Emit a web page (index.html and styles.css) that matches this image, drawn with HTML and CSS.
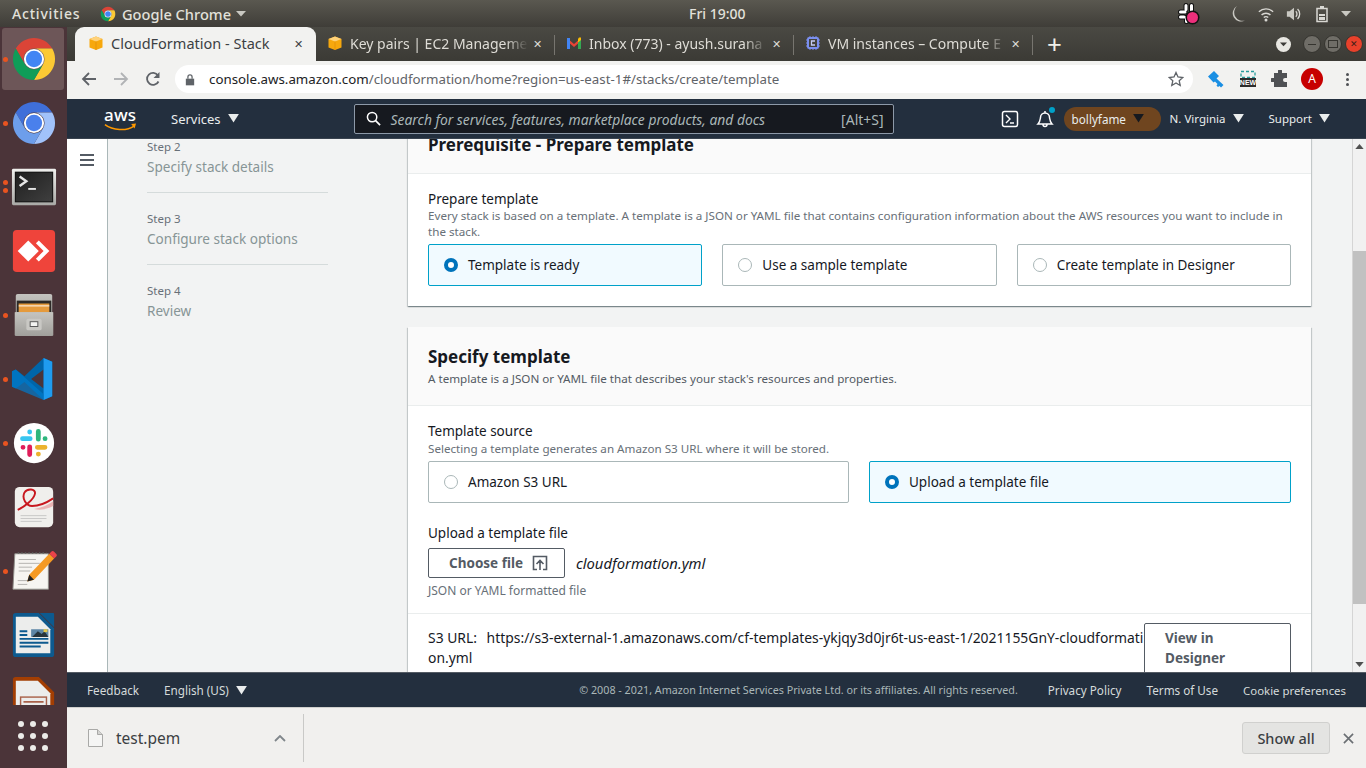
FILE: index.html
```html
<!DOCTYPE html>
<html>
  <head>
    <title>CloudFormation - Stack</title>
    <link rel="stylesheet" href="styles.css">
  </head>
  <body>
    <svg class="defs" width="0" height="0">
      <defs>
        <linearGradient id="bezel" x1="0" y1="0" x2="0" y2="1">
          <stop offset="0" stop-color="#f0f0ee"/>
          <stop offset="1" stop-color="#a9a9a6"/>
        </linearGradient>
        <linearGradient id="screen" x1="0" y1="0" x2="1" y2="1">
          <stop offset="0" stop-color="#1f1f1f"/>
          <stop offset="1" stop-color="#3f3f3f"/>
        </linearGradient>
        <linearGradient id="drawer" x1="0" y1="0" x2="0" y2="1">
          <stop offset="0" stop-color="#c4c3bf"/>
          <stop offset="1" stop-color="#8e8d89"/>
        </linearGradient>
      </defs>
      <symbol id="chrome" viewBox="0 0 48 48">
        <path fill="#db4437" d="M5 13A22 22 0 0 1 43 13H24A11 11 0 0 0 14.500 29.500Z"/>
        <path fill="#fcc934" d="M43 13A22 22 0 0 1 24 46L33.500 29.500A11 11 0 0 0 24 13Z"/>
        <path fill="#0f9d58" d="M24 46A22 22 0 0 1 5 13L14.500 29.500A11 11 0 0 0 33.500 29.500Z"/>
        <circle cx="24" cy="24" r="10.500" fill="#fff"/>
        <circle cx="24" cy="24" r="8.500" fill="#4285f4"/>
      </symbol>
      <symbol id="cube" viewBox="0 0 16 16">
        <path fill="#f7a80d" d="M1.500 4L8 1.500 14.500 4v8.500L8 15l-6.500-2.500z"/>
        <path fill="#ffd27a" d="M1.500 4L8 1.500 14.500 4 8 6.500z"/>
        <path fill="#e8930a" d="M7.500 6.500h1V15h-1z"/>
      </symbol>
      <symbol id="caret" viewBox="0 0 12 10">
        <path fill="currentColor" d="M0 0h12L6 9.500z"/>
      </symbol>
    </svg>

    <div class="topbar">
      <span class="activities">Activities</span>
      <span class="app-menu">
        <svg class="app-icon"><use href="#chrome"/></svg>
        Google Chrome
        <svg class="top-caret" viewBox="0 0 10 6"><path fill="currentColor" d="M0 0h10L5 5.500z"/></svg>
      </span>
      <span class="clock">Fri 19:00</span>
      <div class="tray">
        <svg class="tray-slack" viewBox="0 0 24 24">
          <path fill="none" stroke="#111" stroke-width="5" stroke-linecap="round" d="M9 3.500v4M3.500 10H8M14.500 3.500v5M3.500 15H7M9.500 15.500v4"/>
          <path fill="none" stroke="#fff" stroke-width="3" stroke-linecap="round" d="M9 3.500v4M3.500 10H8M14.500 3.500v5M3.500 15H7M9.500 15.500v4"/>
          <circle cx="15.500" cy="15.500" r="7" fill="#111"/>
          <circle cx="15.500" cy="15.500" r="5.500" fill="#ec2f7b"/>
        </svg>
        <svg class="tray-icon" viewBox="0 0 16 18"><path fill="#c9c8c2" d="M7 1a8 8 0 1 0 8 14.500A8.500 8.500 0 0 1 7 1z"/></svg>
        <svg class="tray-icon" viewBox="0 0 18 18">
          <g fill="none" stroke="#d9d8d3" stroke-width="1.600">
            <path d="M1 6.500a11.500 11.500 0 0 1 16 0M4 10a7.500 7.500 0 0 1 10 0M6.500 13a3.500 3.500 0 0 1 5 0"/>
          </g>
          <circle cx="9" cy="15.800" r="1.700" fill="#d9d8d3"/>
        </svg>
        <svg class="tray-icon" viewBox="0 0 18 18">
          <path fill="#c9c8c2" d="M1 6h3l5-4v14l-5-4H1z"/>
          <path fill="none" stroke="#d9d8d3" stroke-width="1.500" d="M11 6a4 4 0 0 1 0 6M13 3.500a7.500 7.500 0 0 1 0 11"/>
        </svg>
        <svg class="tray-icon" viewBox="0 0 14 18">
          <path fill="none" stroke="#d9d8d3" stroke-width="1.500" d="M2 3.500h10v13H2z"/>
          <path fill="#d9d8d3" d="M5 1h4v2H5zM4 9h6v2H4zM4 12h6v3H4z"/>
        </svg>
        <svg class="top-caret" viewBox="0 0 10 6"><path fill="currentColor" d="M0 0h10L5 5.500z"/></svg>
      </div>
    </div>

    <div class="desktop">
      <aside class="dock">
        <div class="dock-apps">
          <div class="dock-item active"><i class="run"></i>
            <svg class="dock-icon"><use href="#chrome"/></svg>
          </div>
          <div class="dock-item"><i class="run"></i>
            <svg class="dock-icon" viewBox="0 0 48 48">
              <path fill="#3f6fd9" d="M5 13A22 22 0 0 1 43 13H24A11 11 0 0 0 14.500 29.500Z"/>
              <path fill="#a1c2fa" d="M43 13A22 22 0 0 1 24 46L33.500 29.500A11 11 0 0 0 24 13Z"/>
              <path fill="#6d9eeb" d="M24 46A22 22 0 0 1 5 13L14.500 29.500A11 11 0 0 0 33.500 29.500Z"/>
              <circle cx="24" cy="24" r="10.500" fill="#fff"/>
              <circle cx="24" cy="24" r="8.500" fill="#4a80ec"/>
            </svg>
          </div>
          <div class="dock-item"><i class="run double"></i>
            <svg class="dock-icon" viewBox="0 0 48 48">
              <rect x="1" y="5" width="46" height="38" rx="1.500" fill="url(#bezel)"/>
              <rect x="4" y="8" width="40" height="32" fill="#111"/>
              <rect x="5" y="9" width="38" height="30" fill="url(#screen)"/>
              <path fill="none" stroke="#e6e6e6" stroke-width="2.500" d="M9 13l7 5-7 5"/>
              <path fill="#e6e6e6" d="M18 25h8v2h-8z"/>
            </svg>
          </div>
          <div class="dock-item">
            <svg class="dock-icon" viewBox="0 0 48 48">
              <rect x="2" y="2" width="44" height="44" rx="4" fill="#ef443b"/>
              <path fill="#fff" d="M18 13l11 11-11 11L7 24z"/>
              <path fill="#fff" d="M29 13l11 11-11 11-3-3 8-8-8-8z"/>
            </svg>
          </div>
          <div class="dock-item"><i class="run"></i>
            <svg class="dock-icon" viewBox="0 0 48 48">
              <rect x="5" y="2" width="38" height="42" rx="2" fill="url(#drawer)"/>
              <rect x="6" y="9" width="36" height="12" fill="#2d2a27"/>
              <path fill="#e59a3c" d="M8 12h32v9H8z"/>
              <path fill="#fff" d="M8 14h32v1H8z"/>
              <path fill="#c9c8c4" d="M4 21h40v23a2 2 0 0 1-2 2H6a2 2 0 0 1-2-2z"/>
              <path fill="url(#drawer)" d="M4 21h40v25H4z" opacity=".7"/>
              <rect x="16" y="28" width="16" height="12" rx="2" fill="#c9c8c4"/>
              <rect x="20" y="31" width="8" height="5" fill="#f4f4f2" stroke="#555" stroke-width="1"/>
            </svg>
          </div>
          <div class="dock-item"><i class="run"></i>
            <svg class="dock-icon" viewBox="0 0 48 48">
              <path fill="#0065a9" d="M34 2L14 21 5 14 1 16v16l4 2 9-7 20 19 9-4V6zM34 14v20L21 24z"/>
              <path fill="#1f9cf0" d="M34 2l9 4v36l-9 4z"/>
              <path fill="#007acc" d="M5 14l29 26v6L1 32V16z" opacity=".7"/>
            </svg>
          </div>
          <div class="dock-item"><i class="run"></i>
            <svg class="dock-icon" viewBox="0 0 48 48">
              <circle cx="24" cy="24" r="21" fill="#fff"/>
              <g fill="none" stroke-width="5" stroke-linecap="round">
                <path stroke="#36c5f0" d="M19.500 12.500v.1M12 19.500h8"/>
                <path stroke="#2eb67d" d="M28.500 12v8M35.500 19.500h.1"/>
                <path stroke="#ecb22e" d="M35.500 28.500h-8M28.500 35.500h.1"/>
                <path stroke="#e01e5a" d="M19.500 36v-8M12.500 28.500h.1"/>
              </g>
            </svg>
          </div>
          <div class="dock-item">
            <svg class="dock-icon" viewBox="0 0 48 48">
              <rect x="4" y="3" width="40" height="42" rx="5" fill="#f0efec"/>
              <path fill="none" stroke="#c8181f" stroke-width="2" d="M7 27c7-3 17-11 18-17 1-5-8-6-11-1-3 6 2 14 8 14 8 0 16-4 22-8"/>
              <path fill="#eab4b4" d="M24 26c8-1 14-4 20-8v5c-6 3-13 5-20 3z"/>
              <path fill="none" stroke="#c7c7c5" d="M10 33h27M10 36h27M10 39h22"/>
            </svg>
          </div>
          <div class="dock-item"><i class="run"></i>
            <svg class="dock-icon" viewBox="0 0 48 48">
              <path fill="#f6f5f1" stroke="#8f8e89" d="M4 6h35v37H2z"/>
              <path fill="none" stroke="#555" stroke-width="1.500" stroke-dasharray="1.500 2.200" d="M7 5h30"/>
              <path fill="none" stroke="#b3b2ad" d="M8 12h18M8 16h22M8 20h14M8 24h12M7 34h14M7 38h10"/>
              <path fill="#f59a23" d="M40 6l5 5-21 22-7 2 2-7z"/>
              <path fill="#222" d="M19 28l-2 7 7-2z"/>
              <path fill="#e8434a" d="M40 6l2-2a2 2 0 0 1 3 0l2 2a2 2 0 0 1 0 3l-2 2z"/>
            </svg>
          </div>
          <div class="dock-item">
            <svg class="dock-icon" viewBox="0 0 48 48">
              <path fill="#0d5a8f" d="M5 1h24l16 16v27a3 3 0 0 1-3 3H5a3 3 0 0 1-3-3V4a3 3 0 0 1 3-3z"/>
              <path fill="#0d5a8f" d="M30 1h14a1 1 0 0 1 1 1v14z"/>
              <path fill="#ecedec" d="M5 5h23l13 13v25H5z"/>
              <path fill="#0d5a8f" d="M9 19h8v2H9zM9 23h8v2H9zM9 27h30v2H9zM9 31h30v2H9zM9 35h22v2H9z"/>
              <rect x="21" y="18" width="18" height="8" fill="#5e86a6"/>
              <path fill="#27343c" d="M22 26l6-6 4 3 3-3 4 6z"/>
              <rect x="34" y="18" width="4" height="3" fill="#e6c84b"/>
            </svg>
          </div>
          <div class="dock-item clipped">
            <svg class="dock-icon" viewBox="0 0 48 48">
              <path fill="#a33e03" d="M5 1h24l16 16v27a3 3 0 0 1-3 3H5a3 3 0 0 1-3-3V4a3 3 0 0 1 3-3z"/>
              <path fill="#ecedec" d="M5 5h23l13 13v25H5z"/>
              <rect x="10" y="22" width="27" height="18" fill="none" stroke="#a9614a" stroke-width="1.500"/>
              <path fill="#a9614a" d="M13 26h21v2H13zM13 31h9v2h-9z"/>
            </svg>
          </div>
        </div>
        <div class="apps-grid">
          <i></i><i></i><i></i><i></i><i></i><i></i><i></i><i></i><i></i>
        </div>
      </aside>

      <div class="window">
        <div class="tabstrip">
          <div class="tab current">
            <svg class="favicon"><use href="#cube"/></svg>
            <span class="tab-title">CloudFormation - Stack</span>
            <span class="tab-close">&#10005;</span>
          </div>
          <div class="tab">
            <svg class="favicon"><use href="#cube"/></svg>
            <span class="tab-title">Key pairs | EC2 Manageme</span>
            <span class="tab-close">&#10005;</span>
          </div>
          <div class="tab">
            <svg class="favicon" viewBox="0 0 16 16">
              <path fill="#ea4335" d="M1 3l7 6 7-6v3l-7 6-7-6z"/>
              <path fill="#4285f4" d="M1 3h3v11H1z"/>
              <path fill="#34a853" d="M12 5h3v9h-3z"/>
              <path fill="#fbbc04" d="M13 2.500h2V5l-3 2.500V4z"/>
            </svg>
            <span class="tab-title">Inbox (773) - ayush.surana</span>
            <span class="tab-close">&#10005;</span>
          </div>
          <div class="tab">
            <svg class="favicon" viewBox="0 0 16 16">
              <rect x="3" y="3" width="10" height="10" rx="1" fill="none" stroke="#7b8ff0" stroke-width="2"/>
              <path fill="none" stroke="#7b8ff0" d="M5 1v2M8 1v2M11 1v2M5 13v2M8 13v2M11 13v2M1 5h2M1 8h2M1 11h2M13 5h2M13 8h2M13 11h2"/>
              <path fill="none" stroke="#c5cdf7" stroke-width="1.300" d="M10 6H6.500v4H10"/>
            </svg>
            <span class="tab-title">VM instances – Compute E</span>
            <span class="tab-close">&#10005;</span>
          </div>
          <span class="new-tab">+</span>
          <div class="win-controls">
            <span class="profile-drop"><svg viewBox="0 0 10 6"><path fill="#3c3b37" d="M0 0h10L5 5.500z"/></svg></span>
            <span class="win-btn minimize"></span>
            <span class="win-btn maximize"></span>
            <span class="win-btn close">&#10005;</span>
          </div>
        </div>

        <div class="toolbar">
          <svg class="tool-icon" viewBox="0 0 16 16"><path fill="none" stroke="#5f6368" stroke-width="1.800" d="M15 8H2M8 2L2 8l6 6"/></svg>
          <svg class="tool-icon faded" viewBox="0 0 16 16"><path fill="none" stroke="#b1b3b5" stroke-width="1.800" d="M1 8h13M8 2l6 6-6 6"/></svg>
          <svg class="tool-icon" viewBox="0 0 16 16"><path fill="none" stroke="#5f6368" stroke-width="1.800" d="M13.500 10.500A6 6 0 1 1 13 4.500"/><path fill="#5f6368" d="M14.500 1v6h-6z"/></svg>
          <div class="omnibox">
            <svg class="lock" viewBox="0 0 12 14"><path fill="#5f6368" d="M1 6h10v8H1z"/><path fill="none" stroke="#5f6368" stroke-width="1.500" d="M3.500 6V4a2.500 2.500 0 0 1 5 0v2"/></svg>
            <span class="url"><b>console.aws.amazon.com</b>/cloudformation/home?region=us-east-1#/stacks/create/template</span>
            <svg class="star" viewBox="0 0 16 16"><path fill="none" stroke="#5f6368" stroke-width="1.300" d="M8 1.500l2 4.500 4.800.5-3.600 3.200 1 4.800L8 12l-4.200 2.500 1-4.800L1.200 6.500 6 6z"/></svg>
          </div>
          <div class="extensions">
            <svg viewBox="0 0 18 18"><path fill="#1a8fe3" d="M1 6.500L7 1l5 5-2.500 2.500 7 6.500-2.500 2.500-1.500-1.500-1.500 1-1.500-1.500 1-1.500-2.500-2.500-1.500 1z"/></svg>
            <svg viewBox="0 0 18 18"><path fill="none" stroke="#2a9d9d" stroke-width="1.300" stroke-dasharray="3 2" d="M2 1.500h14v6H2z"/><rect x="1" y="8" width="16" height="9" fill="#2d2d2d"/><text x="9" y="15" class="new-badge">NEW</text></svg>
            <svg viewBox="0 0 18 18"><path fill="#4f5154" d="M7 1a2 2 0 0 1 4 0v2h5v5h-2a2 2 0 0 0 0 4h2v5H3v-5H1a2 2 0 0 1 0-4h2V3h4z"/></svg>
            <span class="avatar">A</span>
            <span class="kebab"><i></i><i></i><i></i></span>
          </div>
        </div>

        <nav class="aws-nav">
          <span class="aws-logo">aws
            <svg viewBox="0 0 34 9"><path fill="none" stroke="#f90" stroke-width="1.600" d="M1 1.500c8 6 22 7 30 1.500"/><path fill="#f90" d="M28 1l5-.5-1.500 5z"/></svg>
          </span>
          <span class="services">Services <svg class="nav-caret"><use href="#caret"/></svg></span>
          <div class="search">
            <svg viewBox="0 0 16 16"><circle cx="6.500" cy="6.500" r="5" fill="none" stroke="#fff" stroke-width="1.600"/><path stroke="#fff" stroke-width="1.800" d="M10 10l5 5"/></svg>
            <span class="search-hint">Search for services, features, marketplace products, and docs</span>
            <span class="search-key">[Alt+S]</span>
          </div>
          <svg class="cloudshell" viewBox="0 0 18 18"><rect x="1.500" y="1.500" width="15" height="15" rx="2" fill="none" stroke="#fff" stroke-width="1.500"/><path fill="none" stroke="#fff" stroke-width="1.400" d="M5 5l4 4-4 4M9 13h4"/></svg>
          <span class="bell">
            <svg viewBox="0 0 18 18"><path fill="none" stroke="#fff" stroke-width="1.500" d="M2 14c2-2 2-3 2.500-6.500a4.500 4.500 0 0 1 9 0C14 11 14 12 16 14zM7 14.500a2 2 0 0 0 4 0M9 1v2"/></svg>
            <i></i>
          </span>
          <span class="account">bollyfame <svg class="nav-caret dark"><use href="#caret"/></svg></span>
          <span class="region">N. Virginia <svg class="nav-caret"><use href="#caret"/></svg></span>
          <span class="support">Support <svg class="nav-caret"><use href="#caret"/></svg></span>
        </nav>

        <div class="viewport">
          <div class="side-toggle">
            <span class="burger"><i></i><i></i><i></i></span>
          </div>
          <div class="scroll-area">
            <div class="scrolled">
              <ul class="steps">
                <li><small>Step 2</small><span>Specify stack details</span></li>
                <li><small>Step 3</small><span>Configure stack options</span></li>
                <li><small>Step 4</small><span>Review</span></li>
              </ul>
              <main class="forms">
                <section class="card">
                  <header class="card-head short">
                    <h2>Prerequisite - Prepare template</h2>
                  </header>
                  <div class="card-body first">
                    <div class="label">Prepare template</div>
                    <div class="hint">Every stack is based on a template. A template is a JSON or YAML file that contains configuration information about the AWS resources you want to include in the stack.</div>
                    <div class="tiles three">
                      <div class="tile on"><i class="radio"></i>Template is ready</div>
                      <div class="tile"><i class="radio"></i>Use a sample template</div>
                      <div class="tile"><i class="radio"></i>Create template in Designer</div>
                    </div>
                  </div>
                </section>
                <section class="card">
                  <header class="card-head">
                    <h2>Specify template</h2>
                    <p>A template is a JSON or YAML file that describes your stack's resources and properties.</p>
                  </header>
                  <div class="card-body">
                    <div class="label">Template source</div>
                    <div class="hint source-hint">Selecting a template generates an Amazon S3 URL where it will be stored.</div>
                    <div class="tiles two">
                      <div class="tile"><i class="radio"></i>Amazon S3 URL</div>
                      <div class="tile on"><i class="radio"></i>Upload a template file</div>
                    </div>
                    <div class="label upload">Upload a template file</div>
                    <div class="file-row">
                      <span class="btn choose">Choose file
                        <svg viewBox="0 0 16 16"><path fill="none" stroke="#545b64" stroke-width="1.600" d="M5 14.500H1.500v-13h13v13H11M8 15V6M4.500 9L8 5.500 11.500 9"/></svg>
                      </span>
                      <em>cloudformation.yml</em>
                    </div>
                    <div class="hint file-hint">JSON or YAML formatted file</div>
                  </div>
                  <div class="s3-row">
                    <div class="s3-url"><span class="s3-label">S3 URL:</span> https://s3-external-1.amazonaws.com/cf-templates-ykjqy3d0jr6t-us-east-1/2021155GnY-cloudformation.yml</div>
                    <span class="btn designer">View in Designer</span>
                  </div>
                </section>
              </main>
            </div>
          </div>
          <div class="scrollbar">
            <svg viewBox="0 0 10 6"><path fill="#505050" d="M5 0l5 6H0z"/></svg>
            <div class="track"><div class="thumb"></div></div>
            <svg viewBox="0 0 10 6"><path fill="#505050" d="M0 0h10L5 6z"/></svg>
          </div>
        </div>

        <footer class="aws-foot">
          <span>Feedback</span>
          <span class="lang">English (US) <svg class="nav-caret"><use href="#caret"/></svg></span>
          <span class="copyright">© 2008 - 2021, Amazon Internet Services Private Ltd. or its affiliates. All rights reserved.</span>
          <span class="foot-link first-link">Privacy Policy</span>
          <span class="foot-link">Terms of Use</span>
          <span class="foot-link cookie-link">Cookie preferences</span>
        </footer>

        <div class="downloads">
          <div class="download-item">
            <svg class="file-icon" viewBox="0 0 15 18"><path fill="#f5f5f4" stroke="#a9a9a7" d="M.5.500h9l5 5v12H.500z"/><path fill="#d4d4d2" stroke="#a9a9a7" d="M9.500.500v5h5"/></svg>
            <span class="file-name">test.pem</span>
            <svg class="chevron" viewBox="0 0 12 7"><path fill="none" stroke="#80868b" stroke-width="1.800" d="M1 6l5-5 5 5"/></svg>
          </div>
          <span class="show-all">Show all</span>
          <svg class="dl-close" viewBox="0 0 12 12"><path stroke="#6b6f73" stroke-width="1.800" d="M1 1l10 10M11 1L1 11"/></svg>
        </div>
      </div>
    </div>
  </body>
</html>
```

FILE: styles.css
```css
* {
  box-sizing: border-box;
}

html, body {
  margin: 0;
  height: 100%;
  overflow: hidden;
}

body {
  width: 1366px;
  height: 768px;
  display: flex;
  flex-direction: column;
  font-family: "Noto Sans", sans-serif;
  color: #16191f;
  background: #fff;
}

.defs {
  position: absolute;
}

/* ubuntu top bar */
.topbar {
  height: 27px;
  flex: none;
  display: flex;
  align-items: center;
  padding-left: 12px;
  background: linear-gradient(#5a5850, #3f3d38);
  color: #e2e1db;
  font-size: 14px;
  font-weight: 500;
  position: relative;
}

.activities {
  width: 88px;
  letter-spacing: 0.8px;
}

.app-menu {
  display: flex;
  align-items: center;
  font-size: 14.600px;
}

.app-icon {
  width: 16px;
  height: 16px;
  margin-right: 6px;
}

.top-caret {
  width: 10px;
  height: 6px;
  margin-left: 5px;
  color: #c9c8c2;
}

.clock {
  position: absolute;
  left: 689px;
  top: 4px;
}

.tray {
  margin-left: auto;
  display: flex;
  align-items: center;
  gap: 12px;
  padding-right: 15px;
}

.tray-slack {
  width: 24px;
  height: 24px;
  margin-right: 17px;
}

.tray-icon {
  width: 16px;
  height: 18px;
}

.tray .top-caret {
  margin-left: -1px;
}

.desktop {
  flex: 1;
  display: flex;
  min-height: 0;
}

/* launcher */
.dock {
  width: 67px;
  flex: none;
  background: #4b3439;
  display: flex;
  flex-direction: column;
  position: relative;
}

.dock-apps {
  height: 678px;
  overflow: hidden;
}

.dock-item {
  height: 64px;
  display: flex;
  align-items: center;
  justify-content: center;
  position: relative;
  margin: 0 3px 0 2px;
  border-radius: 3px;
}

.dock-item.active {
  background: #6d5658;
  height: 62px;
  margin-top: 1px;
  margin-bottom: 1px;
}

.dock-icon {
  width: 46px;
  height: 46px;
  margin-left: 1px;
}

.run {
  position: absolute;
  left: 1px;
  top: 50%;
  width: 5px;
  height: 5px;
  margin-top: -2px;
  border-radius: 50%;
  background: #e95420;
}

.run.double {
  margin-top: -7px;
  box-shadow: 0 8px 0 #e95420;
}

.clipped {
  -webkit-mask-image: linear-gradient(#000 60%, transparent 85%);
  mask-image: linear-gradient(#000 60%, transparent 85%);
}

.apps-grid {
  position: absolute;
  left: 18px;
  bottom: 17px;
  display: grid;
  grid-template-columns: repeat(3, 6px);
  gap: 6px;
}

.apps-grid i {
  height: 6px;
  border-radius: 50%;
  background: #ecebe8;
}

/* chrome */
.window {
  flex: 1;
  min-width: 0;
  display: flex;
  flex-direction: column;
}

.tabstrip {
  height: 34px;
  flex: none;
  display: flex;
  align-items: flex-end;
  padding-left: 8px;
  background: linear-gradient(#4a4943, #3b3a35);
  color: #dedcd6;
  font-size: 14px;
}

.tab {
  width: 239px;
  height: 34px;
  display: flex;
  align-items: center;
  padding: 1px 9px 3px 11px;
  position: relative;
}

.tab::after {
  content: "";
  position: absolute;
  right: 0;
  top: 8px;
  bottom: 6px;
  width: 1px;
  background: #77756f;
}

.tab.current {
  width: 241px;
  background: #f2f2f0;
  color: #3c4043;
  border-radius: 9px 9px 0 0;
  padding-left: 13px;
}

.tab.current::after {
  display: none;
}

.favicon {
  width: 16px;
  height: 16px;
  flex: none;
  margin-right: 7px;
}

.tab-title {
  flex: 1;
  min-width: 0;
  white-space: nowrap;
  -webkit-mask-image: linear-gradient(to left, transparent, #000 22px);
  mask-image: linear-gradient(to left, transparent, #000 22px);
}

.tab.current .tab-title {
  font-size: 14.500px;
  -webkit-mask-image: none;
  mask-image: none;
}

.tab-close {
  font-size: 11px;
  width: 18px;
  text-align: center;
  flex: none;
}

.new-tab {
  font-size: 26px;
  line-height: 34px;
  height: 34px;
  margin-left: 14px;
  color: #f0efe9;
}

.win-controls {
  margin-left: auto;
  height: 34px;
  display: flex;
  align-items: center;
}

.profile-drop {
  width: 15px;
  height: 15px;
  border-radius: 50%;
  background: #e8e7e2;
  margin-right: 12px;
  display: flex;
  align-items: center;
  justify-content: center;
}

.profile-drop svg {
  width: 7px;
  height: 5px;
}

.win-btn {
  width: 18px;
  height: 18px;
  border-radius: 50%;
  background: #6f6d67;
  border: 1px solid #35342f;
  color: #3c2018;
  font-size: 9px;
  line-height: 16px;
  text-align: center;
  margin-right: 3px;
  display: flex;
  align-items: center;
  justify-content: center;
}

.win-btn.minimize::before {
  content: "";
  width: 8px;
  height: 1px;
  background: #35342f;
}

.win-btn.maximize::before {
  content: "";
  width: 8px;
  height: 6px;
  border: 1px solid #35342f;
}

.win-btn.close {
  background: #e8412b;
}

.toolbar {
  height: 38px;
  flex: none;
  display: flex;
  align-items: center;
  padding: 0 0 2px 14px;
  background: #f2f2f0;
}

.tool-icon {
  width: 16px;
  height: 16px;
  margin-right: 16px;
}

.omnibox {
  width: 1018px;
  height: 28px;
  margin-left: -2px;
  border-radius: 14px;
  background: #fff;
  display: flex;
  align-items: center;
  padding: 0 9px 0 10px;
}

.lock {
  width: 10px;
  height: 13px;
  margin-right: 14px;
}

.url {
  flex: 1;
  color: #5f6368;
  font-size: 13.300px;
  white-space: nowrap;
}

.url b {
  font-weight: 400;
  color: #202124;
}

.star {
  width: 16px;
  height: 16px;
}

.extensions {
  display: flex;
  align-items: center;
  margin-left: 14px;
  gap: 14px;
}

.extensions svg {
  width: 18px;
  height: 18px;
}

.new-badge {
  font-size: 7px;
  font-weight: 700;
  fill: #fff;
  text-anchor: middle;
  font-family: "Liberation Sans", sans-serif;
}

.avatar {
  width: 22px;
  height: 22px;
  margin-left: -2px;
  border-radius: 50%;
  background: #c70000;
  color: #fff;
  font-size: 12px;
  line-height: 22px;
  text-align: center;
}

.kebab {
  display: flex;
  flex-direction: column;
  gap: 2px;
  margin-left: 9px;
}

.kebab i {
  width: 3px;
  height: 3px;
  border-radius: 50%;
  background: #4f5154;
}

/* aws header */
.aws-nav {
  height: 40px;
  flex: none;
  display: flex;
  align-items: center;
  background: #232f3e;
  border-bottom: 1px solid #39434f;
  color: #eaeded;
  font-size: 12px;
}

.aws-logo {
  margin-left: 37px;
  width: 33px;
  height: 30px;
  color: #fff;
  font-size: 17px;
  font-weight: 500;
  line-height: 22px;
  position: relative;
  letter-spacing: 0.2px;
}

.aws-logo svg {
  position: absolute;
  left: 0;
  top: 19px;
  width: 33px;
  height: 9px;
}

.services {
  margin-left: 34px;
  font-size: 13px;
  display: flex;
  align-items: center;
}

.nav-caret {
  width: 11px;
  height: 9px;
  margin-left: 7px;
  color: #eaeded;
}

.nav-caret.dark {
  color: #16191f;
}

.search {
  width: 540px;
  height: 30px;
  margin-left: 115px;
  border: 1px solid #8d99a8;
  border-radius: 2px;
  background: #16191f;
  display: flex;
  align-items: center;
  padding: 0 9px 0 11px;
  color: #aab7b8;
}

.search svg {
  width: 15px;
  height: 15px;
  margin-right: 10px;
}

.search-hint {
  flex: 1;
  padding-top: 2px;
  font-size: 13.850px;
  font-style: italic;
  white-space: nowrap;
}

.search-key {
  padding-top: 2px;
  font-size: 14px;
}

.cloudshell {
  width: 18px;
  height: 18px;
  margin-left: 107px;
}

.bell {
  width: 18px;
  height: 18px;
  margin-left: 17px;
  position: relative;
}

.bell svg {
  width: 18px;
  height: 18px;
}

.bell i {
  position: absolute;
  right: -1px;
  top: -3px;
  width: 6px;
  height: 6px;
  border-radius: 50%;
  background: #00a1c9;
}

.account {
  width: 97px;
  height: 24px;
  margin-left: 10px;
  border-radius: 12px;
  background: #6f451f;
  display: flex;
  align-items: center;
  padding-left: 8px;
  font-size: 11.700px;
}

.region {
  margin-left: 9px;
  display: flex;
  align-items: center;
  font-size: 11.500px;
}

.support {
  margin-left: 25px;
  display: flex;
  align-items: center;
  font-size: 11.500px;
}

/* console body */
.viewport {
  flex: 1;
  min-height: 0;
  display: flex;
}

.side-toggle {
  width: 41px;
  flex: none;
  background: #fff;
  border-right: 1px solid #aab7b8;
  padding: 15px 0 0 13px;
}

.burger {
  display: flex;
  flex-direction: column;
  gap: 3px;
}

.burger i {
  width: 14px;
  height: 2px;
  background: #545b64;
}

.scroll-area {
  flex: 1;
  min-width: 0;
  overflow: hidden;
  background: #f2f3f3;
}

.scrolled {
  display: flex;
  margin-top: -16px;
}

.steps {
  list-style: none;
  margin: 0;
  padding: 16px 0 0 39px;
  width: 300px;
  flex: none;
}

.steps li {
  width: 181px;
  height: 54px;
  margin-bottom: 18px;
  border-bottom: 1px solid #d5dbdb;
}

.steps li:last-child {
  border-bottom: 0;
}

.steps small {
  display: block;
  font-size: 11.500px;
  line-height: 16px;
  color: #687078;
}

.steps span {
  display: block;
  font-size: 13.550px;
  line-height: 20px;
  margin-top: 2px;
  color: #879596;
}

.forms {
  width: 903px;
  flex: none;
}

.card {
  background: #fff;
  box-shadow: 0 1px 1px 0 rgba(0, 28, 36, 0.3), 1px 1px 1px 0 rgba(0, 28, 36, 0.15), -1px 1px 1px 0 rgba(0, 28, 36, 0.15);
  margin-bottom: 21px;
}

.card-head {
  background: #fafafa;
  border-bottom: 1px solid #eaeded;
  padding: 19px 20px 18px;
}

.card-head.short {
  height: 51px;
  padding: 0 20px;
}

.card-head h2 {
  margin: 0;
  font-size: 17px;
  line-height: 22px;
  font-weight: 700;
  color: #16191f;
}

.card-head.short h2 {
  padding-top: 11px;
}

.card-head p {
  margin: 3px 0 0;
  font-size: 11.650px;
  line-height: 16px;
  color: #545b64;
}

.card-body {
  padding: 16px 20px 14px;
}

.card-body.first {
  padding-bottom: 20px;
}

.label {
  font-size: 13.500px;
  line-height: 18px;
  color: #16191f;
}

.hint {
  font-size: 11.650px;
  line-height: 16px;
  color: #687078;
}

.source-hint {
  margin-top: 1px;
}

.tiles {
  display: grid;
  gap: 20px;
  margin-top: 4px;
}

.tiles.three {
  grid-template-columns: repeat(3, 1fr);
}

.tiles.two {
  grid-template-columns: 421px 1fr;
}

.tile {
  height: 42px;
  border: 1px solid #aab7b8;
  border-radius: 2px;
  display: flex;
  align-items: center;
  padding-left: 15px;
  font-size: 13.500px;
}

.tile.on {
  background: #f1faff;
  border-color: #00a1c9;
}

.radio {
  width: 14px;
  height: 14px;
  margin-right: 10px;
  border-radius: 50%;
  border: 1px solid #aab7b8;
  background: #fff;
}

.tile.on .radio {
  border: 4px solid #0073bb;
}

.label.upload {
  margin-top: 21px;
}

.file-row {
  display: flex;
  align-items: center;
  margin-top: 6px;
}

.btn {
  border: 1px solid #545b64;
  border-radius: 2px;
  background: #fff;
  color: #545b64;
  font-size: 13.500px;
  font-weight: 700;
}

.choose {
  width: 137px;
  height: 30px;
  display: flex;
  align-items: center;
  padding-left: 20px;
}

.choose svg {
  width: 16px;
  height: 16px;
  margin-left: 9px;
}

.file-row em {
  margin-left: 11px;
  font-size: 14.800px;
}

.file-hint {
  margin-top: 5px;
  font-size: 12px;
}

.s3-row {
  border-top: 1px solid #eaeded;
  padding: 9px 20px 20px;
  display: flex;
  align-items: flex-start;
}

.s3-url {
  width: 716px;
  padding-top: 5px;
  font-size: 13.900px;
  line-height: 20px;
  word-break: break-all;
}

.s3-label {
  margin-right: 6px;
}

.designer {
  width: 147px;
  height: 60px;
  padding: 4px 20px;
  line-height: 20px;
}

.scrollbar {
  width: 14px;
  flex: none;
  background: #f1f1f1;
  border-left: 1px solid #d5d5d5;
  display: flex;
  flex-direction: column;
  align-items: center;
  padding: 5px 0;
}

.scrollbar svg {
  width: 9px;
  height: 5px;
  flex: none;
}

.track {
  flex: 1;
  width: 100%;
  padding-top: 102px;
}

.thumb {
  height: 353px;
  background: #c1c1c1;
}

/* footer */
.aws-foot {
  height: 35px;
  flex: none;
  display: flex;
  align-items: center;
  padding: 0 20px;
  background: #232f3e;
  border-top: 1px solid #545b64;
  color: #d5dbdb;
  font-size: 11.700px;
}

.lang {
  margin-left: 25px;
  display: flex;
  align-items: center;
}

.copyright {
  margin-left: auto;
  color: #aab7b8;
  font-size: 10.750px;
}

.foot-link {
  margin-left: 25px;
}

.foot-link.first-link {
  margin-left: 30px;
}

.foot-link.cookie-link {
  font-size: 11.400px;
}

/* download shelf */
.downloads {
  height: 61px;
  flex: none;
  display: flex;
  align-items: center;
  background: #f1f0ee;
  border-top: 1px solid #d0d0ce;
}

.download-item {
  width: 237px;
  height: 48px;
  border-right: 1px solid #c9c9c7;
  display: flex;
  align-items: center;
  padding-left: 21px;
}

.file-icon {
  width: 15px;
  height: 18px;
}

.file-name {
  margin-left: 13px;
  font-size: 15.500px;
  color: #3c4043;
}

.chevron {
  width: 12px;
  height: 7px;
  margin-left: auto;
  margin-right: 17px;
}

.show-all {
  margin-left: auto;
  width: 88px;
  height: 32px;
  border: 1px solid #d0d0ce;
  border-radius: 3px;
  background: #e4e4e2;
  color: #3c4043;
  font-size: 14.500px;
  font-weight: 500;
  line-height: 30px;
  text-align: center;
}

.dl-close {
  width: 11px;
  height: 11px;
  margin: 0 12px 0 13px;
}
```
